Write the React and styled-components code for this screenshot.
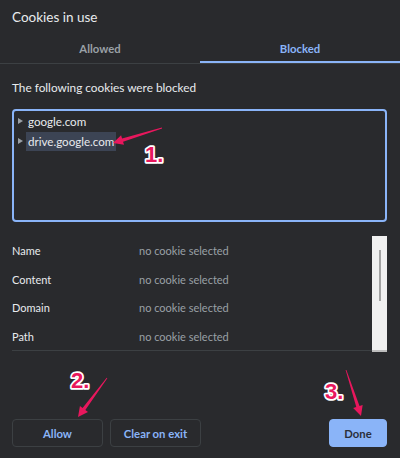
import React from "react";
import styled, { createGlobalStyle } from "styled-components";

const Global = createGlobalStyle`
  html, body { margin: 0; padding: 0; background: #292a2d; }
  body { font-family: "Lato", "Noto Sans", sans-serif; }
`;

const Dialog = styled.div`
  position: relative;
  width: 400px;
  height: 458px;
  background: #292a2d;
  color: #e8eaed;
  display: flex;
  flex-direction: column;
  overflow: hidden;
`;

const Title = styled.h1`
  margin: 0;
  padding: 7px 12px 0;
  height: 27px;
  font-size: 13.5px;
  font-weight: 400;
  line-height: 20px;
  color: #e8eaed;
`;

const Tabs = styled.div`
  display: flex;
  height: 29px;
  border-bottom: 1px solid #3c4043;
`;

const Tab = styled.div`
  flex: 1;
  display: flex;
  align-items: center;
  justify-content: center;
  font-size: 11.3px;
  font-weight: 700;
  color: ${(p) => (p.$active ? "#8ab4f8" : "#9aa0a6")};
  box-shadow: ${(p) => (p.$active ? "inset 0 -2px 0 #8ab4f8" : "none")};
`;

const Body = styled.div`
  padding: 0 13px 0 12px;
  display: flex;
  flex-direction: column;
`;

const Intro = styled.p`
  margin: 16px 0 0;
  font-size: 11.8px;
  line-height: 16px;
  color: #e8eaed;
`;

const TreeBox = styled.div`
  margin-top: 13px;
  height: 113px;
  border: 2px solid #8ab4f8;
  border-radius: 4px;
  box-sizing: border-box;
  padding: 0 0 0 4px;
`;

const TreeRow = styled.div`
  display: flex;
  align-items: center;
  height: 20px;
`;

const Twisty = styled.span`
  width: 0;
  height: 0;
  border-top: 3.5px solid transparent;
  border-bottom: 3.5px solid transparent;
  border-left: 5px solid #9aa0a6;
  margin-right: 3px;
`;

const TreeLabel = styled.span`
  font-size: 11.6px;
  line-height: 19px;
  padding: 0 2px;
  color: #e8eaed;
  background: ${(p) => (p.$selected ? "#3c4454" : "transparent")};
`;

const Details = styled.div`
  margin-top: 14px;
  display: flex;
  height: 116px;
`;

const DetailList = styled.div`
  flex: 1;
  border-bottom: 1px solid #3c4043;
  margin-bottom: 1px;
`;

const DetailRow = styled.div`
  display: grid;
  grid-template-columns: 127px 1fr;
  align-items: center;
  height: 28.7px;
  font-size: 11px;
`;

const DetailLabel = styled.span`
  color: #e8eaed;
`;

const DetailValue = styled.span`
  color: #9aa0a6;
`;

const Scrollbar = styled.div`
  width: 15px;
  background: #f0f0f0;
  border-bottom: 2px solid #bdbdbd;
  box-sizing: border-box;
  display: flex;
  justify-content: center;
  padding-top: 14px;
`;

const Thumb = styled.div`
  width: 2px;
  height: 51px;
  background: #a3a3a3;
`;

const Footer = styled.div`
  margin-top: auto;
  padding: 0 13px 11px 12px;
  display: flex;
  gap: 7px;
`;

const Button = styled.button`
  height: 28px;
  width: ${(p) => p.$w}px;
  margin-left: ${(p) => (p.$push ? "auto" : "0")};
  border-radius: 4px;
  border: 1px solid ${(p) => (p.$primary ? "#8ab4f8" : "#3c4043")};
  background: ${(p) => (p.$primary ? "#8ab4f8" : "transparent")};
  color: ${(p) => (p.$primary ? "#2a2f3a" : "#8ab4f8")};
  font-family: "Lato", "Noto Sans", sans-serif;
  font-size: 11.3px;
  font-weight: 700;
  padding: 0;
`;

const Overlay = styled.svg`
  position: absolute;
  left: 0;
  top: 0;
  pointer-events: none;
`;

const Num = styled.text`
  font-family: "Liberation Sans", Arial, sans-serif;
  font-weight: 700;
  font-size: 22px;
  fill: #e8175d;
  stroke: #ffffff;
  stroke-width: 3.5px;
  paint-order: stroke;
  stroke-linejoin: round;
`;

function Arrow({ x1, y1, x2, y2 }) {
  const dx = x2 - x1;
  const dy = y2 - y1;
  const len = Math.hypot(dx, dy);
  const ux = dx / len;
  const uy = dy / len;
  const nx = -uy;
  const ny = ux;
  const headLen = 10;
  const headW = 5;
  const bx = x2 - ux * headLen;
  const by = y2 - uy * headLen;
  const shaft = [
    [x1 + nx * 0.4, y1 + ny * 0.4],
    [bx + nx * 1.7, by + ny * 1.7],
    [bx + nx * headW, by + ny * headW],
    [x2, y2],
    [bx - nx * headW, by - ny * headW],
    [bx - nx * 1.7, by - ny * 1.7],
    [x1 - nx * 0.4, y1 - ny * 0.4],
  ];
  return (
    <polygon
      points={shaft.map((p) => p.join(",")).join(" ")}
      fill="#e8175d"
    />
  );
}

export default function App() {
  return (
    <>
      <Global />
      <Dialog>
        <Title>Cookies in use</Title>
        <Tabs>
          <Tab>Allowed</Tab>
          <Tab $active>Blocked</Tab>
        </Tabs>
        <Body>
          <Intro>The following cookies were blocked</Intro>
          <TreeBox>
            <TreeRow>
              <Twisty />
              <TreeLabel>google.com</TreeLabel>
            </TreeRow>
            <TreeRow>
              <Twisty />
              <TreeLabel $selected>drive.google.com</TreeLabel>
            </TreeRow>
          </TreeBox>
          <Details>
            <DetailList>
              {["Name", "Content", "Domain", "Path"].map((l) => (
                <DetailRow key={l}>
                  <DetailLabel>{l}</DetailLabel>
                  <DetailValue>no cookie selected</DetailValue>
                </DetailRow>
              ))}
            </DetailList>
            <Scrollbar>
              <Thumb />
            </Scrollbar>
          </Details>
        </Body>
        <Footer>
          <Button $w={91}>Allow</Button>
          <Button $w={91}>Clear on exit</Button>
          <Button $w={58} $primary $push>
            Done
          </Button>
        </Footer>
        <Overlay width="400" height="458" viewBox="0 0 400 458">
          <Arrow x1={162} y1={128} x2={113} y2={143} />
          <Arrow x1={107} y1={378} x2={78} y2={417} />
          <Arrow x1={346} y1={370} x2={361} y2={416} />
          <Num x={145} y={162}>1.</Num>
          <Num x={71} y={388}>2.</Num>
          <Num x={325} y={399}>3.</Num>
        </Overlay>
      </Dialog>
    </>
  );
}
